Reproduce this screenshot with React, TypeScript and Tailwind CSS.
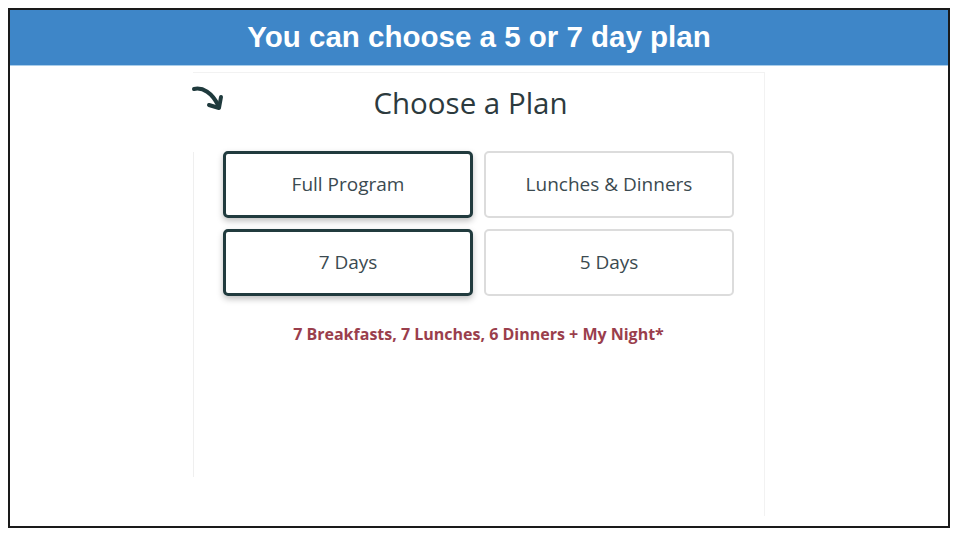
import React from 'react';

const opts = [
  [{ label: 'Full Program', on: true }, { label: 'Lunches & Dinners', on: false }],
  [{ label: '7 Days', on: true }, { label: '5 Days', on: false }],
];

function PlanBtn({ label, on }: { label: string; on: boolean }) {
  return (
    <div
      className={
        'w-[250px] h-[67px] flex items-center justify-center rounded-[5px] text-[19px] text-[#3b4a50] ' +
        (on ? 'border-[3px] border-[#213b3e] shadow-[0_3px_6px_rgba(0,0,0,0.25)]' : 'border-2 border-[#dcdcdc]')
      }
    >
      {label}
    </div>
  );
}

export default function App() {
  return (
    <div className="w-[960px] h-[540px] bg-white pt-[8px] pl-[8px]" style={{ fontFamily: '"Open Sans", sans-serif' }}>
      <div className="w-[942px] h-[520px] border-2 border-[#1a1a1a] flex flex-col">
        {/* header bar */}
        <div className="h-[56px] bg-[#3e86c8] border-b border-[#a9cdea] flex items-center justify-center">
          <h1 className="text-white font-bold text-[29.5px]" style={{ fontFamily: '"Liberation Sans", Arial, sans-serif' }}>
            You can choose a 5 or 7 day plan
          </h1>
        </div>

        <div className="flex-1 pt-[6px]">
          <div className="ml-[183px] w-[572px] h-[444px] border-t border-r border-[#f2f2f2] relative">
            {/* arrow */}
            <svg className="absolute left-[-2px] top-[10px]" width="34" height="30" viewBox="0 0 34 30">
              <path d="M3 6 C 12 4, 21 10, 27 22" fill="none" stroke="#1f3a3d" strokeWidth="4" strokeLinecap="round" />
              <path d="M18 22 L 28 25 L 30 14" fill="none" stroke="#1f3a3d" strokeWidth="4" strokeLinecap="round" strokeLinejoin="round" />
            </svg>

            <div className="text-center text-[29.5px] text-[#2c3a3e] pt-[11px] pr-[16px] leading-[38px]">Choose a Plan</div>

            <div className="mt-[30px] flex">
              <div className="w-px h-[325px] bg-[#efefef]" />
              <div className="ml-[29px] flex flex-col gap-[11px] -mt-[1px]">
                {opts.map((row, i) => (
                  <div key={i} className="flex gap-[11px]">
                    {row.map((o) => (
                      <PlanBtn key={o.label} label={o.label} on={o.on} />
                    ))}
                  </div>
                ))}
                <div className="text-center font-bold text-[16px] text-[#9a3e4c] mt-[15px]">
                  7 Breakfasts, 7 Lunches, 6 Dinners + My Night*
                </div>
              </div>
            </div>
          </div>
        </div>
      </div>
    </div>
  );
}
